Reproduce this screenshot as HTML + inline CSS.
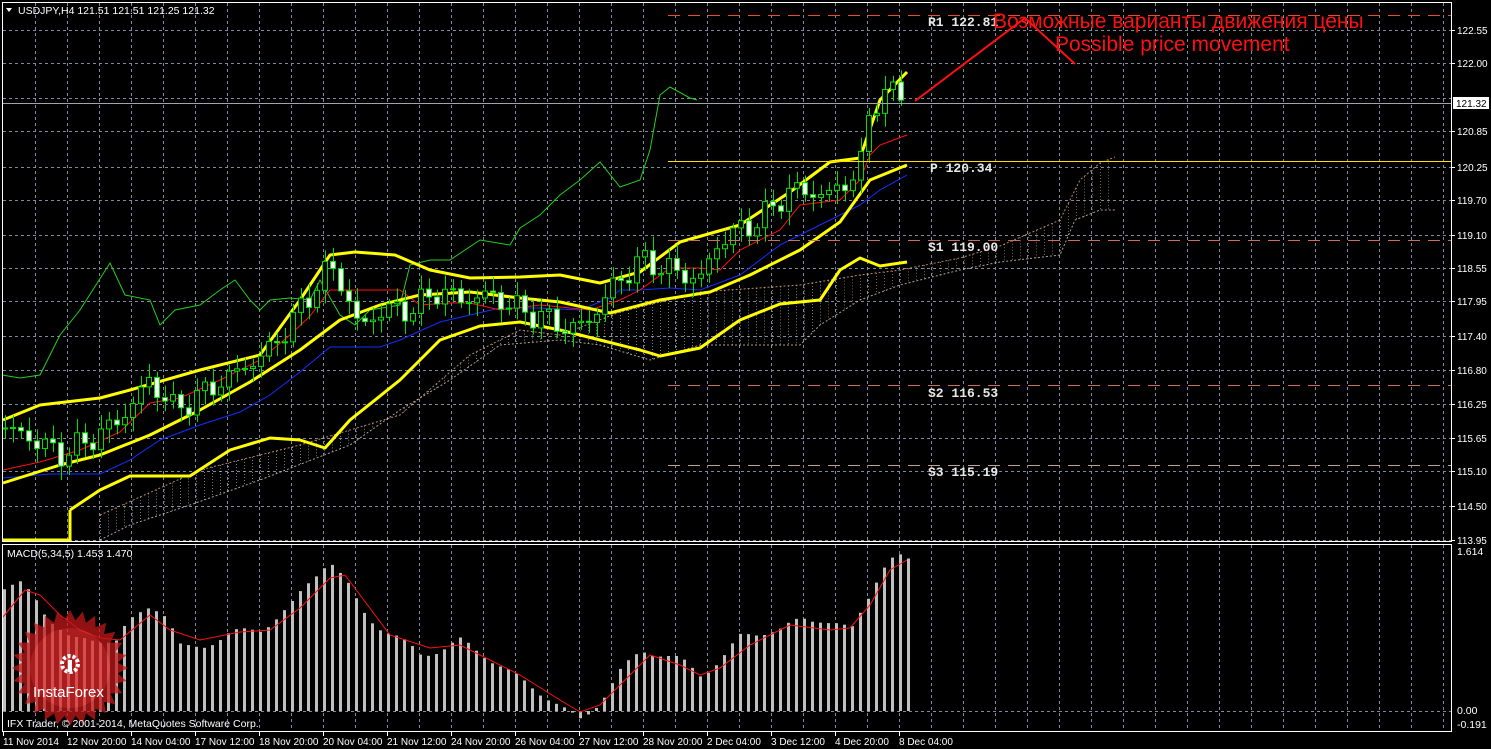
<!DOCTYPE html>
<html><head><meta charset="utf-8"><style>
html,body{margin:0;padding:0;background:#000;}
body{width:1491px;height:749px;overflow:hidden;position:relative;font-family:"Liberation Sans",sans-serif;}
svg{position:absolute;left:0;top:0;}
</style></head><body>
<svg id="s" width="1491" height="749" viewBox="0 0 1491 749" xmlns="http://www.w3.org/2000/svg">
<rect width="1491" height="749" fill="#000"/>
<g id="grid" stroke="#7f8aa0" stroke-width="1" stroke-dasharray="3,3"></g>
<g id="cloud"></g>
<g id="lines"></g>
<g id="candles"></g>
<g id="macd"></g>
<line x1="668" y1="15.5" x2="1451" y2="15.5" stroke="#e0502a" stroke-dasharray="12,8"/>
<line x1="668" y1="161.5" x2="1451" y2="161.5" stroke="#ffe000" stroke-width="1"/>
<line x1="668" y1="240.5" x2="1451" y2="240.5" stroke="#c87060" stroke-dasharray="12,8"/>
<line x1="668" y1="385.5" x2="1451" y2="385.5" stroke="#c87060" stroke-dasharray="12,8"/>
<line x1="668" y1="465.5" x2="1451" y2="465.5" stroke="#c0a090" stroke-dasharray="12,8"/>
<line x1="3" y1="103.5" x2="1451" y2="103.5" stroke="#a0a4ac"/>
<g font-family="Liberation Mono, monospace" font-weight="bold" font-size="13" fill="#e8e8e8">
<text x="928" y="26">R1 122.81</text>
<text x="930" y="172">P 120.34</text>
<text x="928" y="251">S1 119.00</text>
<text x="928" y="397">S2 116.53</text>
<text x="928" y="476">S3 115.19</text>
</g>
<polyline points="915,101 1025,18 1075,64" fill="none" stroke="#ff1010" stroke-width="2"/>
<g font-family="Liberation Sans, sans-serif" font-size="21" fill="#ff1010">
<text x="993" y="28">Возможные варианты движения цены</text>
<text x="1055" y="51">Possible price movement</text>
</g>
<rect x="2.5" y="2.5" width="1449" height="539" fill="none" stroke="#fff"/>
<rect x="2.5" y="544.5" width="1449" height="187" fill="none" stroke="#fff"/>
<g id="axis" font-family="Liberation Sans, sans-serif" font-size="10" fill="#fff"></g>
<rect x="1453" y="97" width="36" height="12" fill="#fff"/>
<text x="1456" y="107" font-size="10" fill="#000" font-family="Liberation Sans, sans-serif">121.32</text>
<g font-family="Liberation Sans, sans-serif" font-size="10.5" fill="#fff">
<path d="M6 8 L12 8 L9 12 Z" fill="#fff"/>
<text x="18" y="14">USDJPY,H4  121.51 121.51 121.25 121.32</text>
<text x="7" y="557">MACD(5,34,5) 1.453 1.470</text>
<text x="1457" y="555">1.614</text>
<text x="1457" y="714">0.00</text>
<text x="1457" y="728">-0.191</text>
</g>
<g id="logo" opacity="0.75"></g>
<g font-family="Liberation Sans, sans-serif" font-size="10.5" fill="#fff">
<text x="7" y="727">IFX Trader, © 2001-2014, MetaQuotes Software Corp.</text>
</g>
</svg>
<script>
const NS="http://www.w3.org/2000/svg";
function el(p,t,a){const e=document.createElementNS(NS,t);for(const k in a)e.setAttribute(k,a[k]);p.appendChild(e);return e;}
function I(pts,x){if(x<=pts[0][0])return pts[0][1];for(let i=1;i<pts.length;i++){if(x<=pts[i][0]){const a=pts[i-1],b=pts[i];return a[1]+(b[1]-a[1])*(x-a[0])/(b[0]-a[0]);}}return pts[pts.length-1][1];}
function pl(pts){return pts.map(p=>p.join(",")).join(" ");}
const g=document.getElementById("grid");
for(let x=35;x<1451;x+=32){el(g,"line",{x1:x+.5,y1:3,x2:x+.5,y2:541});el(g,"line",{x1:x+.5,y1:545,x2:x+.5,y2:731});}
const hy=[30,63,98,131,167,200,235,268,301,336,370,404,438,471,506,540];
const hl=["122.55","122.00","121.40","120.85","120.25","119.70","119.10","118.55","117.95","117.40","116.80","116.25","115.65","115.10","114.50","113.95"];
hy.forEach(y=>el(g,"line",{x1:3,y1:y+.5,x2:1451,y2:y+.5}));
el(g,"line",{x1:3,y1:711.5,x2:1451,y2:711.5});
const ax=document.getElementById("axis");
hy.forEach((y,i)=>{if(i==2)return;el(ax,"line",{x1:1451,y1:y+.5,x2:1455,y2:y+.5,stroke:"#fff"});const t=el(ax,"text",{x:1457,y:y+4});t.textContent=hl[i];});
const tl=["11 Nov 2014","12 Nov 20:00","14 Nov 04:00","17 Nov 12:00","18 Nov 20:00","20 Nov 04:00","21 Nov 12:00","24 Nov 20:00","26 Nov 04:00","27 Nov 12:00","28 Nov 20:00","2 Dec 04:00","3 Dec 12:00","4 Dec 20:00","8 Dec 04:00"];
tl.forEach((s,i)=>{const x=3+i*64;el(ax,"line",{x1:x+.5,y1:731,x2:x+.5,y2:736,stroke:"#fff"});const t=el(ax,"text",{x:x,y:745});t.textContent=s;});
const cl=document.getElementById("cloud");
const cBot=[[100,540],[130,525],[190,505],[260,480],[350,445],[400,410],[450,380],[500,345],[560,340],[600,345],[650,360],[700,345],[750,345],[800,345],[820,325],[860,300],[900,285],[960,270],[1000,262],[1060,255],[1075,220],[1100,210],[1115,210]];
const cTop=[[100,515],[200,470],[300,445],[400,415],[470,355],[520,330],[560,335],[620,312],[700,292],[800,285],[860,275],[900,270],[960,258],[1000,246],[1030,233],[1060,220],[1080,180],[1100,163],[1115,157]];
for(let x=100;x<=1115;x+=8){const a=I(cTop,x),b=I(cBot,x);el(cl,"line",{x1:x+.5,y1:a,x2:x+.5,y2:b,stroke:x>820?"#e0a880":"#d0d0d0",opacity:.6,"stroke-dasharray":"1,2"});}
el(cl,"polyline",{points:pl(cTop),fill:"none",stroke:"#e0a880","stroke-dasharray":"2,2",opacity:.8});
el(cl,"polyline",{points:pl(cBot),fill:"none",stroke:"#d8c8c0","stroke-dasharray":"2,2",opacity:.8});
const L=document.getElementById("lines");
const green=[[2,375],[20,378],[40,375],[60,335],[80,310],[110,263],[125,295],[150,300],[160,325],[175,310],[200,305],[220,290],[235,280],[250,300],[260,310],[270,300],[290,298],[310,300],[320,280],[340,315],[355,325],[370,310],[400,305],[410,265],[430,260],[450,260],[480,240],[510,245],[520,228],[540,215],[560,195],[580,180],[600,162],[620,187],[640,180],[650,150],[660,95],[670,87],[690,98],[697,100]];
const red=[[3,470],[40,462],[80,450],[120,432],[150,403],[180,398],[220,380],[260,360],[290,335],[310,316],[330,290],[360,290],[400,290],[420,305],[450,303],[470,303],[500,310],[540,305],[590,310],[620,300],[640,290],[670,268],[700,268],[720,270],[740,250],[780,230],[800,205],[840,200],[860,180],[870,155],[880,145],[907,135]];
const blue=[[3,478],[50,474],[100,474],[130,460],[160,440],[200,425],[240,412],[270,395],[300,372],[330,347],[380,347],[400,340],[440,322],[500,308],[540,308],[580,310],[610,298],[620,290],[640,290],[670,288],[700,290],[740,275],[780,245],[800,235],[840,215],[860,205],[880,190],[907,175]];
const yU=[[3,420],[40,405],[100,398],[130,390],[200,370],[260,355],[300,300],[330,255],[355,252],[395,255],[430,270],[470,278],[520,277],[560,275],[600,283],[640,272],[680,242],[740,225],[790,192],[830,162],[860,158],[880,100],[907,72]];
const yM=[[3,483],[60,465],[100,455],[150,435],[200,410],[250,382],[300,350],[340,320],[380,305],[420,295],[470,292],[520,298],[560,302],[610,313],[660,300],[710,292],[750,275],[800,250],[840,222],[870,180],[907,165]];
const yL=[[70,510],[100,490],[130,476],[190,476],[230,450],[270,438],[300,440],[325,448],[350,420],[400,380],[440,340],[480,326],[520,322],[560,330],[600,340],[640,350],[660,356],[700,348],[740,320],[780,304],[820,300],[840,270],[860,258],[880,266],[907,262]];
el(L,"polyline",{points:pl(green),fill:"none",stroke:"#20d020"});
el(L,"polyline",{points:pl(blue),fill:"none",stroke:"#1030ff"});
el(L,"polyline",{points:pl(red),fill:"none",stroke:"#ff1010"});
[yU,yM,yL].forEach(p=>el(L,"polyline",{points:pl(p),fill:"none",stroke:"#ffff00","stroke-width":3,"stroke-linejoin":"round"}));
el(L,"polyline",{points:"3,540 70,540 70,510",fill:"none",stroke:"#ffff00","stroke-width":3});
const C=document.getElementById("candles");
const cp=[[5,428],[35,440],[60,455],[90,440],[120,420],[150,380],[175,410],[200,395],[240,370],[270,350],[300,310],[330,265],[345,290],[360,330],[380,310],[410,310],[440,290],[460,300],[490,295],[520,310],[550,320],[570,330],[590,320],[610,290],[640,260],[670,270],[700,280],[720,240],[760,220],[790,190],[830,195],[860,170],[870,110],[880,95],[900,92],[907,97]];
let prev=428;
for(let x=5;x<=907;x+=8){let c=I(cp,x)+Math.sin(x*1.37)*9+Math.cos(x*0.53)*5;if(x==907)c=103;const o=prev;const top=Math.min(o,c),bot=Math.max(o,c);const hi=top-4-Math.abs(Math.sin(x*2.1))*10,lo=bot+4+Math.abs(Math.cos(x*1.7))*10;
el(C,"line",{x1:x+.5,y1:hi,x2:x+.5,y2:lo,stroke:"#00e000"});
const bear=c>o;el(C,"rect",{x:x-2.5,y:top,width:5,height:Math.max(1,bot-top),fill:bear?"#fff":"#000",stroke:"#00e000"});prev=c;}
const M=document.getElementById("macd");
const mt=[[3,588],[20,584],[35,600],[45,615],[60,630],[70,640],[100,640],[115,640],[125,625],[150,605],[165,615],[180,648],[200,648],[230,632],[260,630],[290,605],[310,580],[325,563],[330,562],[345,582],[360,610],[375,625],[400,640],[420,655],[440,650],[460,640],[490,660],[520,680],[550,700],[570,715],[580,720],[600,700],[620,670],[640,650],[680,660],[700,675],[720,660],[740,635],[780,630],[800,618],[820,620],[850,630],[865,600],[880,570],[895,556],[907,560]];
for(let x=3;x<=907;x+=8){const t=I(mt,x)+Math.sin(x*0.9)*3;el(M,"rect",{x:x,y:Math.min(t,711),width:3,height:Math.abs(711-t)||1,fill:"#c0c0c0"});}
const ms=[[3,617],[25,590],[40,595],[60,615],[80,630],[100,638],[120,640],[150,615],[170,630],[200,640],[240,632],[270,630],[300,608],[330,578],[345,575],[360,595],[390,635],[430,648],[460,645],[480,655],[520,675],[560,700],[580,712],[600,705],[620,685],[650,655],[680,665],[700,675],[720,668],[750,645],[790,625],[830,630],[850,628],[870,605],[890,570],[907,560]];
el(M,"polyline",{points:pl(ms),fill:"none",stroke:"#ff1010"});
const lg=document.getElementById("logo");
let sp=[];const cx=70,cy=668,n=28;for(let i=0;i<n*2;i++){const r=i%2?48:58;const a=i*Math.PI/n;sp.push([cx+r*Math.cos(a),cy+r*Math.sin(a)]);}
el(lg,"polygon",{points:pl(sp.map(p=>[p[0].toFixed(1),p[1].toFixed(1)])),fill:"#c01818"});
el(lg,"circle",{cx:cx,cy:cy,r:40,fill:"#e02828"});
const gear=el(document.getElementById("s"),"g",{});
el(gear,"circle",{cx:70,cy:664,r:8,fill:"none",stroke:"#fff","stroke-width":4,"stroke-dasharray":"3,2"});
el(gear,"rect",{x:68,y:660,width:4,height:12,fill:"#fff"});
const lt=el(gear,"text",{x:33,y:697,"font-size":"15",fill:"#fff","font-family":"Liberation Sans, sans-serif"});lt.textContent="InstaForex";
</script>
</body></html>
